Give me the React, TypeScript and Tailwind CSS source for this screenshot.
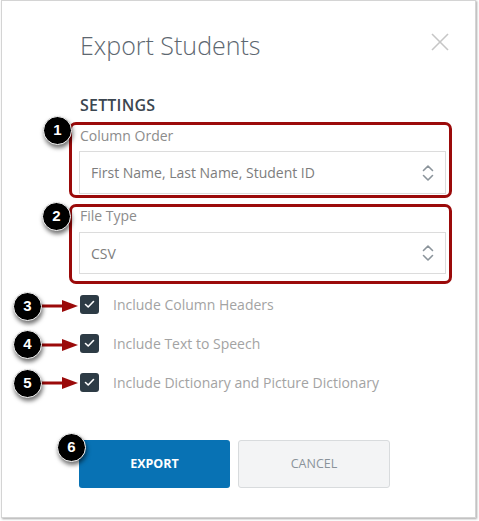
import React from 'react';

const Badge: React.FC<{ n: number; className: string }> = ({ n, className }) => (
  <div
    className={`absolute w-[29px] h-[29px] rounded-full bg-black border-[1.5px] border-white shadow-[1px_3px_4px_rgba(0,0,0,0.55)] flex items-center justify-center text-white text-[15px] font-bold font-['Liberation_Sans',sans-serif] ${className}`}
  >
    {n}
  </div>
);

const Arrow: React.FC<{ className: string }> = ({ className }) => (
  <svg className={`absolute ${className}`} width="38" height="14" viewBox="0 0 38 14">
    <rect x="0" y="5.5" width="22" height="3" fill="#9b0a0a" />
    <polygon points="21,1 37,7 21,13" fill="#9b0a0a" />
  </svg>
);

const Chevrons = () => (
  <svg width="12" height="18" viewBox="0 0 12 18" fill="none" stroke="#8b949b" strokeWidth="1.6" strokeLinecap="round" strokeLinejoin="round">
    <polyline points="1.5,6.5 6,2 10.5,6.5" />
    <polyline points="1.5,11.5 6,16 10.5,11.5" />
  </svg>
);

const Check = () => (
  <svg width="11" height="9" viewBox="0 0 11 9" fill="none" stroke="white" strokeWidth="1.6" strokeLinecap="round" strokeLinejoin="round">
    <polyline points="1.5,4.5 4.2,7 9.5,1.5" />
  </svg>
);

export default function App() {
  const options = [
    'Include Column Headers',
    'Include Text to Speech',
    'Include Dictionary and Picture Dictionary',
  ];

  return (
    <div className="relative w-[479px] h-[521px] bg-white font-['Open_Sans',sans-serif] overflow-hidden">
      {/* Dialog panel */}
      <div className="ml-px w-[475px] h-[518px] border border-[#d4d4d4] shadow-[1px_1px_2px_rgba(0,0,0,0.35)] bg-white pl-[67px] pr-[24px] pt-[28px]">
        {/* Header */}
        <div className="flex items-start justify-between pl-[11px]">
          <h1 className="text-[25px] leading-[32px] font-light text-[#5d6770]">Export Students</h1>
          <svg className="mt-[4px] mr-[2px]" width="18" height="18" viewBox="0 0 18 18" stroke="#c6c6c6" strokeWidth="1.6">
            <line x1="1" y1="1" x2="17" y2="17" />
            <line x1="17" y1="1" x2="1" y2="17" />
          </svg>
        </div>

        <h2 className="mt-[33px] pl-[11px] text-[16px] leading-[22px] font-semibold text-[#3b4650] tracking-[0.2px]">
          SETTINGS
        </h2>

        {/* Column order */}
        <div className="mt-[6px] w-[383px] h-[76px] border-[3px] border-[#9b0a0a] rounded-[7px] pl-[7px] pr-[3px]">
          <div className="h-[26px] pt-px pl-px text-[14px] leading-[20px] text-[#8c8c8c]">Column Order</div>
          <div className="h-[43px] border border-[#dcdcdc] flex items-center justify-between pl-[11px] pr-[11px]">
            <span className="text-[14px] text-[#7d7d7d]">First Name, Last Name, Student ID</span>
            <Chevrons />
          </div>
        </div>

        {/* File type */}
        <div className="mt-[6px] w-[383px] h-[80px] border-[3px] border-[#9b0a0a] rounded-[7px] pl-[7px] pr-[3px]">
          <div className="h-[25px] -mt-px mb-px pl-px text-[14px] leading-[20px] text-[#8c8c8c]">File Type</div>
          <div className="h-[42px] border border-[#dcdcdc] flex items-center justify-between pl-[11px] pr-[11px]">
            <span className="text-[14px] text-[#7d7d7d]">CSV</span>
            <Chevrons />
          </div>
        </div>

        {/* Options */}
        <div className="mt-[11px] pl-[11px] flex flex-col gap-[20px]">
          {options.map(label => (
            <div key={label} className="flex items-center h-[19px]">
              <div className="w-[19px] h-[19px] rounded-[3px] bg-[#2d3b45] flex items-center justify-center">
                <Check />
              </div>
              <span className="ml-[14px] text-[14px] text-[#a3a3a3]">{label}</span>
            </div>
          ))}
        </div>

        {/* Buttons */}
        <div className="mt-[48px] pl-[10px] flex gap-[8px]">
          <button className="w-[151px] h-[48px] rounded-[3px] bg-[#0872b4] text-white text-[12.5px] font-bold">
            EXPORT
          </button>
          <button className="w-[152px] h-[48px] rounded-[3px] bg-[#f3f4f5] border border-[#d8dbdd] text-[#8a939a] text-[12.5px]">
            CANCEL
          </button>
        </div>
      </div>

      {/* Annotations */}
      <Badge n={1} className="left-[43px] top-[116px]" />
      <Badge n={2} className="left-[42px] top-[202px]" />
      <Arrow className="left-[41px] top-[299px]" />
      <Arrow className="left-[41px] top-[338px]" />
      <Arrow className="left-[41px] top-[376px]" />
      <Badge n={3} className="left-[13px] top-[292px]" />
      <Badge n={4} className="left-[13px] top-[330px]" />
      <Badge n={5} className="left-[13px] top-[369px]" />
      <Badge n={6} className="left-[57px] top-[433px]" />
    </div>
  );
}
